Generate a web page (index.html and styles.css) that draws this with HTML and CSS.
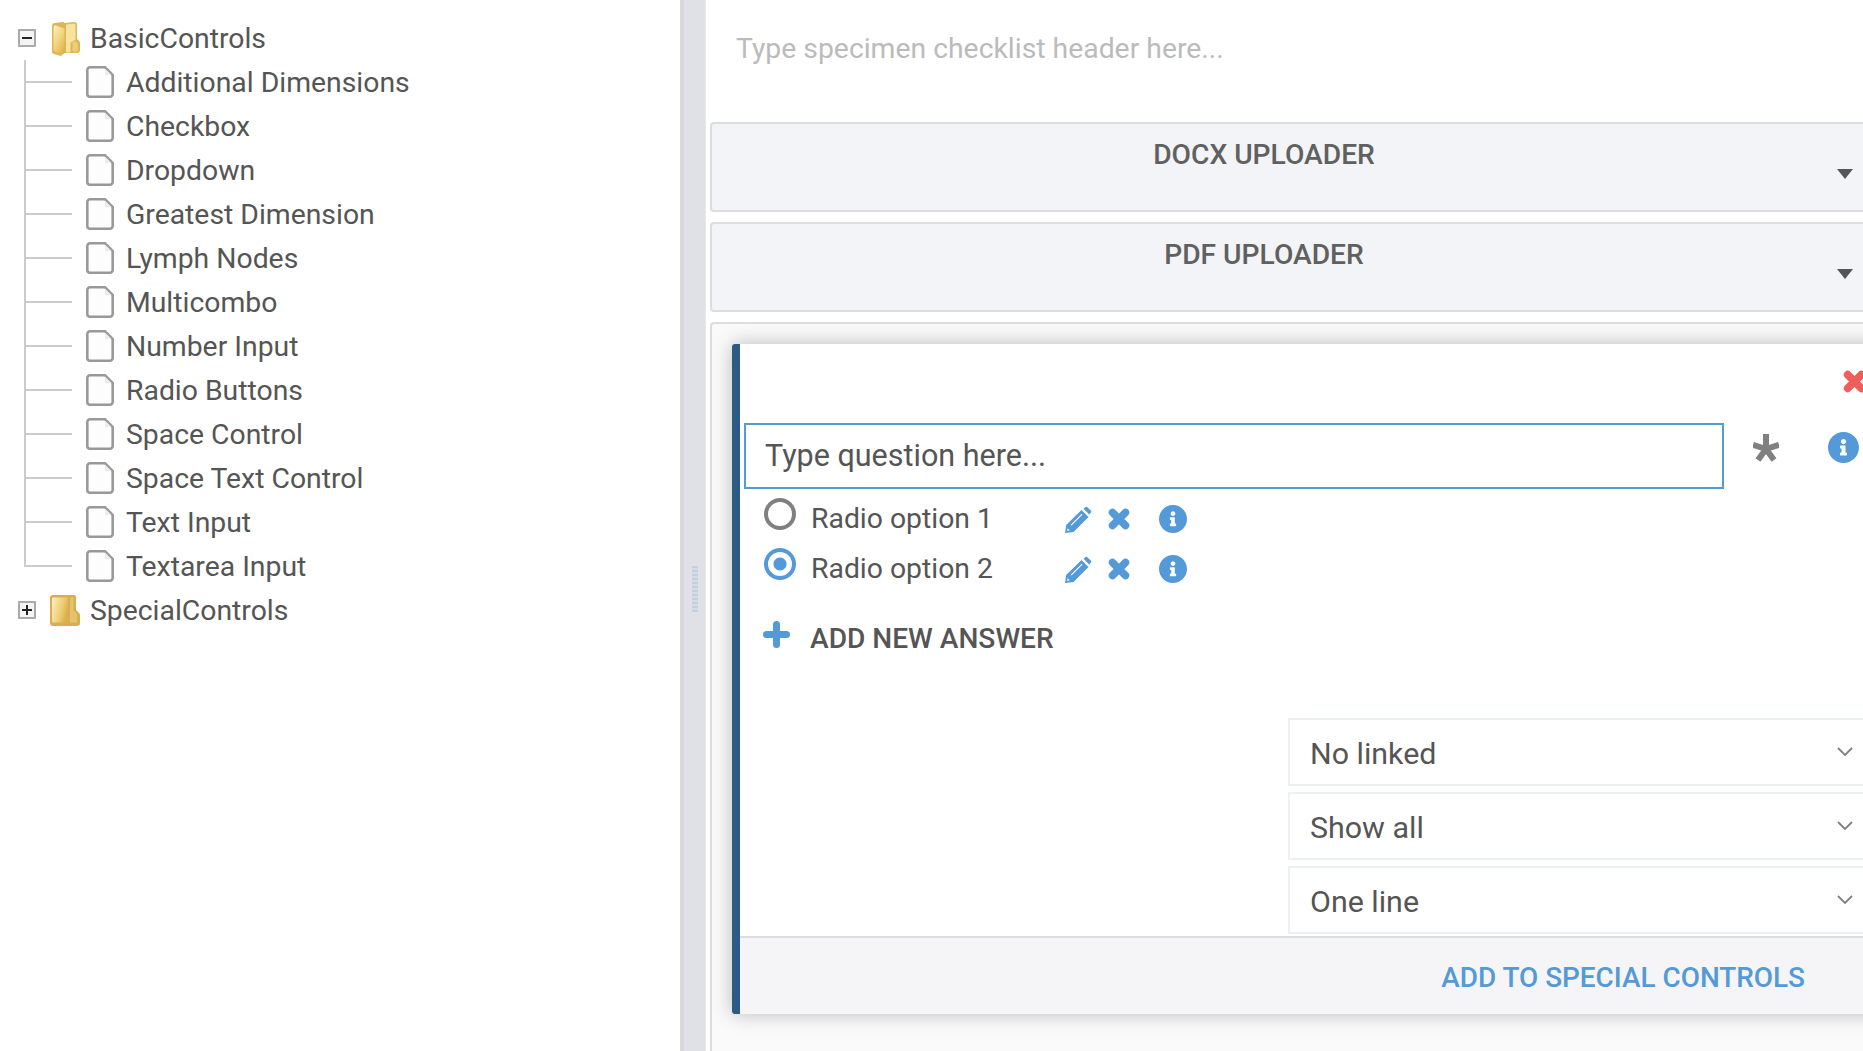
FILE: index.html
```html
<!DOCTYPE html>
<html lang="en">
<head>
<meta charset="utf-8">
<title>Checklist builder</title>
<link rel="stylesheet" href="styles.css">
</head>
<body>
<svg class="defs" width="0" height="0" aria-hidden="true">
  <defs>
    <linearGradient id="fold" x1="0" y1="0" x2="0.7" y2="1">
      <stop offset="0" stop-color="#fbf1c4"/><stop offset="0.6" stop-color="#f0d27a"/><stop offset="1" stop-color="#e2b450"/>
    </linearGradient>
    <linearGradient id="foldc" x1="0" y1="0" x2="1" y2="0.4">
      <stop offset="0" stop-color="#fbf0c6"/><stop offset="0.7" stop-color="#eccb70"/><stop offset="1" stop-color="#dfb24e"/>
    </linearGradient>
    <symbol id="info" viewBox="8 8 496 496"><path d="M256 8C119.043 8 8 119.083 8 256c0 136.997 111.043 248 248 248s248-111.003 248-248C504 119.083 392.957 8 256 8zm0 110c23.196 0 42 18.804 42 42s-18.804 42-42 42-42-18.804-42-42 18.804-42 42-42zm56 254c0 6.627-5.373 12-12 12h-88c-6.627 0-12-5.373-12-12v-24c0-6.627 5.373-12 12-12h12v-64h-12c-6.627 0-12-5.373-12-12v-24c0-6.627 5.373-12 12-12h64c6.627 0 12 5.373 12 12v100h12c6.627 0 12 5.373 12 12v24z"/></symbol>
    <symbol id="times" viewBox="0 0 22 22"><path d="M4.500 4.500l13 13M17.500 4.500l-13 13" stroke="currentColor" stroke-width="7.500" stroke-linecap="round" fill="none"/></symbol>
    <symbol id="pencil" viewBox="0 0 27 27"><path fill-rule="evenodd" d="M20.200 1.200a1.600 1.600 0 0 1 2.200 0l3.400 3.400a1.600 1.600 0 0 1 0 2.200l-1.600 1.600-5.600-5.600zM16.500 3.900L23.500 10.900 8.500 26 0 27l1.200-8.100zM16.700 7.700L5.700 18.700l.8.8 11-11zM2.700 22.200l-.6 2.700 2.700-.6z"/></symbol>
    <symbol id="fileicon" viewBox="0 0 28 32"><path d="M4 1.300h15l7.700 7.700v19a2.700 2.700 0 0 1-2.700 2.700H4A2.700 2.700 0 0 1 1.300 28V4A2.700 2.700 0 0 1 4 1.300z" fill="#fdfdfd" stroke="#999" stroke-width="2.600"/><path d="M19 2.500v6.500h6.500z" fill="#ececec"/></symbol>
    <symbol id="openfolder" viewBox="0 0 30 35"><path d="M2 5c0-2 1-3 3-3l8-1 2 1 9-1c2 0 3 1 3 3v14l2 2c1 1 1 2 1 3v6c0 2-1 3-3 3H14l-3 3-7-2c-2-.6-2-2-2-3z" fill="#dcb555"/><path d="M16 3.500l8-1c1 0 1.500 1 1.500 2v14.500l-3 1-2 2v9.500h-4.500z" fill="#f7e3a0"/><path d="M3.500 7c0-2 1-3 2.500-2.500l8.500 3V31c0 1.500-1 2.500-2.500 2l-6-2c-1.700-.6-2.500-1.500-2.500-3z" fill="url(#fold)"/><path d="M22.500 21l2.500-1.500 3 3.500v7.500h-5.500z" fill="#eccd78"/></symbol>
    <symbol id="closedfolder" viewBox="0 0 30 32"><path d="M3 1h21c1.500 0 2 1 2 2v13l3 3c1 1 1 2 1 3v7c0 2-1 3-3 3H3c-2 0-3-1-3-3V4c0-2 1-3 3-3z" fill="#d9ae4e"/><path d="M3.500 3.500h14.500v11l-1.500 3v11H3.500c-1 0-1.500-.5-1.500-1.500V5c0-1 .5-1.500 1.500-1.500z" fill="url(#foldc)"/><path d="M20 3.500h3.500v13l3.500 3.500v8.500h-7z" fill="#e6c36a"/></symbol>
  </defs>
</svg>

<div class="app">
  <nav class="tree">
    <div class="tree-root">
      <span class="toggle"><span class="toggle-h"></span></span>
      <svg class="folder"><use href="#openfolder"/></svg>
      <span class="tree-label">BasicControls</span>
    </div>
    <div class="tree-leaf"><span class="conn"></span><svg class="file"><use href="#fileicon"/></svg><span class="leaf-label">Additional Dimensions</span></div>
    <div class="tree-leaf"><span class="conn"></span><svg class="file"><use href="#fileicon"/></svg><span class="leaf-label">Checkbox</span></div>
    <div class="tree-leaf"><span class="conn"></span><svg class="file"><use href="#fileicon"/></svg><span class="leaf-label">Dropdown</span></div>
    <div class="tree-leaf"><span class="conn"></span><svg class="file"><use href="#fileicon"/></svg><span class="leaf-label">Greatest Dimension</span></div>
    <div class="tree-leaf"><span class="conn"></span><svg class="file"><use href="#fileicon"/></svg><span class="leaf-label">Lymph Nodes</span></div>
    <div class="tree-leaf"><span class="conn"></span><svg class="file"><use href="#fileicon"/></svg><span class="leaf-label">Multicombo</span></div>
    <div class="tree-leaf"><span class="conn"></span><svg class="file"><use href="#fileicon"/></svg><span class="leaf-label">Number Input</span></div>
    <div class="tree-leaf"><span class="conn"></span><svg class="file"><use href="#fileicon"/></svg><span class="leaf-label">Radio Buttons</span></div>
    <div class="tree-leaf"><span class="conn"></span><svg class="file"><use href="#fileicon"/></svg><span class="leaf-label">Space Control</span></div>
    <div class="tree-leaf"><span class="conn"></span><svg class="file"><use href="#fileicon"/></svg><span class="leaf-label">Space Text Control</span></div>
    <div class="tree-leaf"><span class="conn"></span><svg class="file"><use href="#fileicon"/></svg><span class="leaf-label">Text Input</span></div>
    <div class="tree-leaf"><span class="conn conn-last"></span><svg class="file"><use href="#fileicon"/></svg><span class="leaf-label">Textarea Input</span></div>
    <div class="tree-root">
      <span class="toggle"><span class="toggle-h"></span><span class="toggle-v"></span></span>
      <svg class="folder folder-closed"><use href="#closedfolder"/></svg>
      <span class="tree-label">SpecialControls</span>
    </div>
  </nav>

  <div class="splitter"><span class="grip"></span></div>

  <main class="main">
    <div class="header-placeholder">Type specimen checklist header here...</div>

    <section class="accordion">
      <div class="accordion-title">DOCX UPLOADER</div>
      <span class="caret"></span>
    </section>
    <section class="accordion">
      <div class="accordion-title">PDF UPLOADER</div>
      <span class="caret"></span>
    </section>

    <section class="builder">
      <div class="card">
        <div class="card-close"><svg class="icon-close"><use href="#times"/></svg></div>

        <div class="question-row">
          <div class="question-input">Type question here...</div>
          <svg class="icon-star" viewBox="0 0 26 28"><path d="M13 15V0M13 15L26 10.800M13 15L21 26M13 15L5 26M13 15L0 10.800" stroke="#808080" stroke-width="6" fill="none"/></svg>
          <svg class="icon-info-lg"><use href="#info"/></svg>
        </div>

        <div class="option">
          <span class="radio"></span>
          <span class="option-label">Radio option 1</span>
          <svg class="icon-pencil"><use href="#pencil"/></svg>
          <svg class="icon-x"><use href="#times"/></svg>
          <svg class="icon-info"><use href="#info"/></svg>
        </div>
        <div class="option">
          <span class="radio radio-on"></span>
          <span class="option-label">Radio option 2</span>
          <svg class="icon-pencil"><use href="#pencil"/></svg>
          <svg class="icon-x"><use href="#times"/></svg>
          <svg class="icon-info"><use href="#info"/></svg>
        </div>

        <div class="add-answer">
          <svg class="icon-plus" viewBox="0 0 27 27"><path d="M13.500 3.500v20M3.500 13.500h20" stroke="#5499d8" stroke-width="7" stroke-linecap="round" fill="none"/></svg>
          <span class="add-label">ADD NEW ANSWER</span>
        </div>

        <div class="selects">
          <div class="select"><span class="select-text">No linked</span><svg class="chevron" viewBox="0 0 16 10"><path d="M1 1l7 7 7-7" stroke="#808080" stroke-width="1.800" fill="none"/></svg></div>
          <div class="select"><span class="select-text">Show all</span><svg class="chevron" viewBox="0 0 16 10"><path d="M1 1l7 7 7-7" stroke="#808080" stroke-width="1.800" fill="none"/></svg></div>
          <div class="select"><span class="select-text">One line</span><svg class="chevron" viewBox="0 0 16 10"><path d="M1 1l7 7 7-7" stroke="#808080" stroke-width="1.800" fill="none"/></svg></div>
        </div>

        <div class="card-footer"><span class="footer-link">ADD TO SPECIAL CONTROLS</span></div>
      </div>
    </section>
  </main>
</div>
</body>
</html>
```

FILE: styles.css
```css
* { box-sizing: border-box; }
html, body { margin: 0; height: 100%; background: #fff; }
body { font-family: Roboto, "Liberation Sans", sans-serif; color: #555; overflow: hidden; }
.defs { position: absolute; }
.app { display: flex; height: 1051px; overflow: hidden; }

/* tree */
.tree { width: 680px; flex: none; padding-top: 16px; }
.tree-root { display: flex; align-items: center; height: 44px; padding-left: 18px; }
.toggle { width: 18px; height: 18px; border: 2px solid #aaa; background: #f4f4f4; display: flex; align-items: center; justify-content: center; position: relative; flex: none; border-radius: 1px; }
.toggle-h { width: 10px; height: 2px; background: #222; }
.toggle-v { position: absolute; width: 2px; height: 10px; background: #222; left: 6px; top: 2px; }
.folder { width: 30px; height: 35px; margin-left: 14px; flex: none; }
.folder-closed { height: 32px; }
.tree-label { margin-left: 10px; padding-top: 2px; font-size: 28.35px; line-height: 44px; white-space: nowrap; }
.tree-leaf { display: flex; align-items: center; height: 44px; padding-left: 24px; }
.conn { width: 48px; height: 44px; flex: none; background:
  linear-gradient(#ccc, #ccc) left top / 2px 100% no-repeat,
  linear-gradient(#ccc, #ccc) left 21px / 100% 2px no-repeat; }
.conn-last { background:
  linear-gradient(#ccc, #ccc) left top / 2px 23px no-repeat,
  linear-gradient(#ccc, #ccc) left 21px / 100% 2px no-repeat; }
.file { width: 28px; height: 32px; margin-left: 14px; flex: none; }
.leaf-label { margin-left: 12px; padding-top: 2px; font-size: 28.35px; line-height: 44px; white-space: nowrap; }

/* splitter */
.splitter { width: 26px; flex: none; background: #dfe1e6; border-left: 4px solid #d9d9d9; border-right: 1px solid #e8e8e8; }
.grip { display: block; width: 6px; height: 46px; margin: 566px 0 0 8px; background:
  repeating-linear-gradient(#c3d0e2 0 2px, #d4dbe6 2px 4px); }

/* main */
.main { flex: 1; min-width: 0; overflow: hidden; padding-left: 4px; }
.header-placeholder { width: 1260px; height: 122px; padding: 31px 0 0 26px; font-size: 28.35px; line-height: 36px; color: #bbb; }
.accordion { width: 1260px; height: 90px; margin-bottom: 10px; display: flex; align-items: flex-start; background: #f3f4f8; border: 2px solid #ddd; border-radius: 4px; }
.accordion-title { width: 1104px; padding-top: 1px; text-align: center; font-size: 28.2px; font-weight: 500; line-height: 60px; color: #606060; }
.caret { width: 0; height: 0; margin: 45px 0 0 21px; border-left: 8px solid transparent; border-right: 8px solid transparent; border-top: 10px solid #555; }

.builder { width: 1260px; height: 729px; background: #fafafa; border-top: 2px solid #ddd; border-left: 2px solid #ddd; border-radius: 4px 0 0 0; padding: 20px 0 0 20px; }
.card { width: 1200px; height: 670px; background: #fff; border-left: 8px solid #2a5a85; border-radius: 3px 0 0 3px; box-shadow: 0 0 20px rgba(0,0,0,.26); }
.card-close { height: 79px; padding: 26px 0 0 1103px; }
.icon-close { display: block; width: 23px; height: 23px; color: #ef5e58; }

.question-row { display: flex; align-items: flex-start; height: 66px; padding-left: 4px; }
.question-input { width: 980px; height: 66px; border: 2px solid #5499d8; padding-left: 19px; font-size: 30.5px; line-height: 62px; }
.icon-star { width: 26px; height: 28px; margin: 11px 0 0 29px; flex: none; }
.icon-info-lg { width: 31px; height: 31px; margin: 9px 0 0 49px; fill: #5499d8; flex: none; }

.option { display: flex; align-items: center; height: 50px; padding-left: 24px; position: relative; top: 5px; }
.radio { width: 32px; height: 32px; margin-bottom: 10px; border: 4px solid #808080; border-radius: 50%; flex: none; background: #fff; }
.radio-on { border-color: #5499d8; background: radial-gradient(circle, #5499d8 0 6px, #fff 7px); }
.option-label { width: 254px; margin-left: 15px; padding-bottom: 2px; font-size: 28.35px; flex: none; }
.icon-pencil { width: 27px; height: 27px; fill: #5499d8; flex: none; }
.icon-x { width: 22px; height: 22px; margin-left: 16px; color: #5499d8; flex: none; }
.icon-info { width: 28px; height: 28px; margin-left: 29px; fill: #5499d8; flex: none; }

.add-answer { display: flex; align-items: center; height: 44px; margin-top: 25px; padding-left: 23px; }
.icon-plus { width: 27px; height: 27px; margin-bottom: 3px; flex: none; }
.add-label { margin-left: 20px; padding-top: 5px; font-size: 28.1px; font-weight: 500; }

.selects { margin: 60px 0 0 548px; display: flex; flex-direction: column; gap: 6px; }
.select { width: 700px; height: 68px; display: flex; align-items: center; justify-content: space-between; padding: 0 133px 0 20px; border: 2px solid #eef1f1; background: #fff; }
.select-text { padding-top: 2px; font-size: 30.4px; }
.chevron { width: 16px; height: 10px; }

.card-footer { height: 78px; margin-top: 2px; display: flex; align-items: center; justify-content: flex-end; padding-right: 127px; background: #f5f5f7; border-top: 2px solid #ddd; }
.footer-link { padding-top: 3px; font-size: 27.9px; font-weight: 500; color: #5499d8; }
```
